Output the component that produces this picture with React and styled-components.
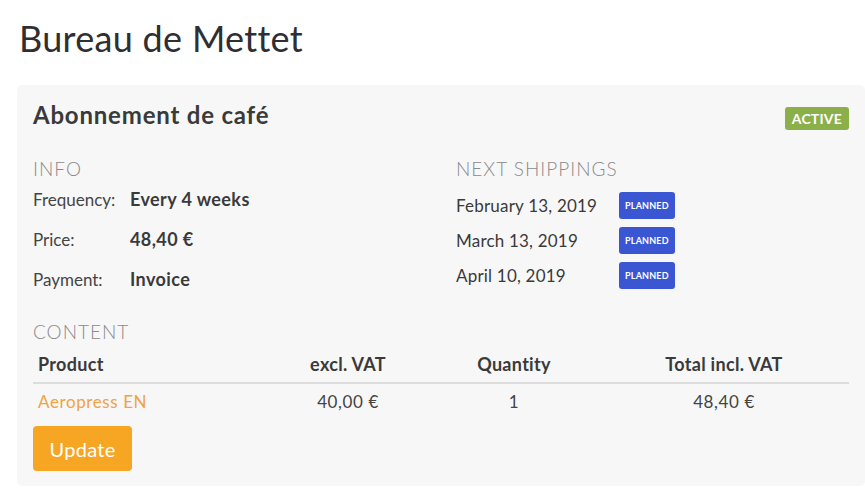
import React from "react";
import styled, { createGlobalStyle } from "styled-components";

const Global = createGlobalStyle`
  html, body { margin: 0; padding: 0; background: #fff; }
  body { font-family: Lato, "Open Sans", sans-serif; color: #3a3a3a; }
  * { box-sizing: border-box; }
`;

const Page = styled.div`
  padding: 14px 0 0 17px;
  width: 865px;
`;

const Title = styled.h1`
  margin: 0 0 0 2px;
  font-size: 36px;
  font-weight: 400;
  line-height: 48px;
  color: #2e2e33;
  letter-spacing: 0.3px;
`;

const Card = styled.section`
  margin-top: 23px;
  width: 848px;
  background: #f7f7f7;
  border-radius: 5px;
  padding: 14px 16px 15px 16px;
`;

const Header = styled.div`
  display: flex;
  justify-content: space-between;
  align-items: flex-start;
`;

const CardTitle = styled.h2`
  margin: 0;
  font-size: 24px;
  font-weight: 700;
  line-height: 32px;
  letter-spacing: 0.8px;
  color: #3a3a3a;
`;

const Badge = styled.span`
  display: inline-flex;
  align-items: center;
  justify-content: center;
  color: #fff;
  background: ${(p) => p.$bg};
  border-radius: 3px;
  font-weight: 700;
  font-size: ${(p) => p.$size}px;
  height: ${(p) => p.$h}px;
  padding: 0 ${(p) => p.$px}px;
  letter-spacing: 0.2px;
`;

const ActiveBadge = styled(Badge)`
  margin-top: 8px;
  margin-right: 0;
`;

const Columns = styled.div`
  display: grid;
  grid-template-columns: 423px 1fr;
  margin-top: 27px;
`;

const SectionLabel = styled.div`
  font-size: 19px;
  font-weight: 300;
  color: #8a8a8a;
  line-height: 22px;
  text-transform: uppercase;
  letter-spacing: 1px;
`;

const InfoRow = styled.div`
  display: grid;
  grid-template-columns: 97px 1fr;
  align-items: center;
  height: 40px;
`;

const InfoLabel = styled.span`
  font-size: 17px;
  color: #444;
`;

const InfoValue = styled.span`
  font-size: 18px;
  font-weight: 700;
  letter-spacing: 0.4px;
  color: #3a3a3a;
`;

const InfoList = styled.div`
  margin-top: -1px;
`;

const ShipList = styled.div`
  margin-top: 8px;
`;

const ShipRow = styled.div`
  display: grid;
  grid-template-columns: 163px auto;
  justify-content: start;
  align-items: center;
  height: 35px;
`;

const ShipDate = styled.span`
  font-size: 17px;
  letter-spacing: 0.2px;
  color: #3a3a3a;
`;

const ContentBlock = styled.div`
  margin-top: 22px;
`;

const Table = styled.div`
  margin-top: 2px;
`;

const TRow = styled.div`
  display: grid;
  grid-template-columns: 233px 164px 168px 252px;
  align-items: center;
  height: ${(p) => p.$h}px;
  border-bottom: ${(p) => (p.$line ? "2px solid #dcdcdc" : "none")};
`;

const Cell = styled.div`
  padding: 0 5px;
  text-align: ${(p) => (p.$left ? "left" : "center")};
  font-size: ${(p) => (p.$head ? 18 : 17)}px;
  font-weight: ${(p) => (p.$head ? 700 : 400)};
  letter-spacing: ${(p) => (p.$head ? 0.3 : 0.6)}px;
  color: ${(p) => (p.$link ? "#f0a245" : p.$head ? "#3a3a3a" : "#444")};
`;

const Button = styled.button`
  margin-top: 8px;
  width: 99px;
  height: 45px;
  border: none;
  border-radius: 4px;
  background: #f6a623;
  color: #fff;
  font-family: inherit;
  font-size: 20px;
  font-weight: 400;
  letter-spacing: 0.3px;
  cursor: pointer;
`;

const shippings = ["February 13, 2019", "March 13, 2019", "April 10, 2019"];

export default function App() {
  return (
    <>
      <Global />
      <Page>
        <Title>Bureau de Mettet</Title>
        <Card>
          <Header>
            <CardTitle>Abonnement de café</CardTitle>
            <ActiveBadge $bg="#8bb04a" $size={14} $h={23} $px={7}>
              ACTIVE
            </ActiveBadge>
          </Header>
          <Columns>
            <div>
              <SectionLabel>Info</SectionLabel>
              <InfoList>
                <InfoRow>
                  <InfoLabel>Frequency:</InfoLabel>
                  <InfoValue>Every 4 weeks</InfoValue>
                </InfoRow>
                <InfoRow>
                  <InfoLabel>Price:</InfoLabel>
                  <InfoValue>48,40 €</InfoValue>
                </InfoRow>
                <InfoRow>
                  <InfoLabel>Payment:</InfoLabel>
                  <InfoValue>Invoice</InfoValue>
                </InfoRow>
              </InfoList>
            </div>
            <div>
              <SectionLabel>Next shippings</SectionLabel>
              <ShipList>
                {shippings.map((d) => (
                  <ShipRow key={d}>
                    <ShipDate>{d}</ShipDate>
                    <Badge $bg="#3b56d3" $size={9} $h={27} $px={6}>
                      PLANNED
                    </Badge>
                  </ShipRow>
                ))}
              </ShipList>
            </div>
          </Columns>
          <ContentBlock>
            <SectionLabel>Content</SectionLabel>
            <Table>
              <TRow $h={39} $line>
                <Cell $left $head>Product</Cell>
                <Cell $head>excl. VAT</Cell>
                <Cell $head>Quantity</Cell>
                <Cell $head>Total incl. VAT</Cell>
              </TRow>
              <TRow $h={34}>
                <Cell $left $link>Aeropress EN</Cell>
                <Cell>40,00 €</Cell>
                <Cell>1</Cell>
                <Cell>48,40 €</Cell>
              </TRow>
            </Table>
            <Button>Update</Button>
          </ContentBlock>
        </Card>
      </Page>
    </>
  );
}
